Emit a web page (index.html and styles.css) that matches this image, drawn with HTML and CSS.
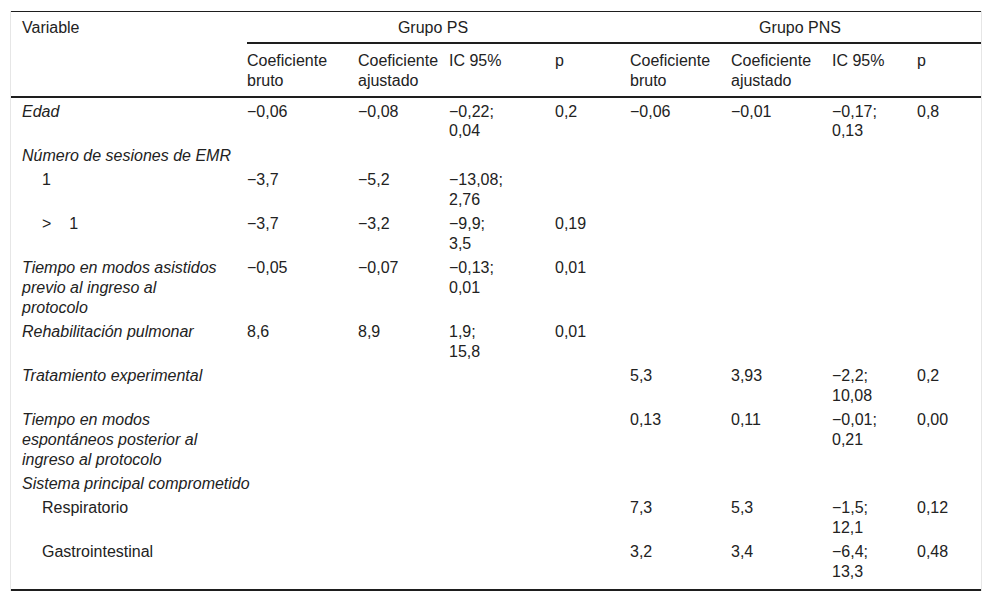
FILE: index.html
```html
<!DOCTYPE html>
<html lang="es">
<head>
<meta charset="utf-8">
<title>Tabla</title>
<link rel="stylesheet" href="styles.css">
</head>
<body>
<div class="wrap">
<table class="tbl">
<colgroup>
<col class="c-var"><col class="c-b1"><col class="c-a1"><col class="c-ic1"><col class="c-p1">
<col class="c-b2"><col class="c-a2"><col class="c-ic2"><col class="c-p2">
</colgroup>
<thead>
<tr>
<th rowspan="2" class="h-var">Variable</th>
<th colspan="4" class="h-grp">Grupo PS</th>
<th colspan="4" class="h-grp">Grupo PNS</th>
</tr>
<tr class="h-sub">
<th>Coeficiente<br>bruto</th>
<th>Coeficiente<br>ajustado</th>
<th>IC 95%</th>
<th>p</th>
<th>Coeficiente<br>bruto</th>
<th>Coeficiente<br>ajustado</th>
<th>IC 95%</th>
<th>p</th>
</tr>
</thead>
<tbody>
<tr>
<td class="var">Edad</td>
<td>−0,06</td><td>−0,08</td><td>−0,22;<br>0,04</td><td>0,2</td>
<td>−0,06</td><td>−0,01</td><td>−0,17;<br>0,13</td><td>0,8</td>
</tr>
<tr>
<td class="var">Número de sesiones de EMR</td>
<td></td><td></td><td></td><td></td><td></td><td></td><td></td><td></td>
</tr>
<tr>
<td class="sub">1</td>
<td>−3,7</td><td>−5,2</td><td>−13,08;<br>2,76</td><td></td>
<td></td><td></td><td></td><td></td>
</tr>
<tr>
<td class="sub">&gt;&nbsp;&nbsp;&nbsp;&nbsp;1</td>
<td>−3,7</td><td>−3,2</td><td>−9,9;<br>3,5</td><td>0,19</td>
<td></td><td></td><td></td><td></td>
</tr>
<tr>
<td class="var">Tiempo en modos asistidos<br>previo al ingreso al<br>protocolo</td>
<td>−0,05</td><td>−0,07</td><td>−0,13;<br>0,01</td><td>0,01</td>
<td></td><td></td><td></td><td></td>
</tr>
<tr>
<td class="var">Rehabilitación pulmonar</td>
<td>8,6</td><td>8,9</td><td>1,9;<br>15,8</td><td>0,01</td>
<td></td><td></td><td></td><td></td>
</tr>
<tr>
<td class="var">Tratamiento experimental</td>
<td></td><td></td><td></td><td></td>
<td>5,3</td><td>3,93</td><td>−2,2;<br>10,08</td><td>0,2</td>
</tr>
<tr>
<td class="var">Tiempo en modos<br>espontáneos posterior al<br>ingreso al protocolo</td>
<td></td><td></td><td></td><td></td>
<td>0,13</td><td>0,11</td><td>−0,01;<br>0,21</td><td>0,00</td>
</tr>
<tr>
<td class="var">Sistema principal comprometido</td>
<td></td><td></td><td></td><td></td><td></td><td></td><td></td><td></td>
</tr>
<tr>
<td class="sub">Respiratorio</td>
<td></td><td></td><td></td><td></td>
<td>7,3</td><td>5,3</td><td>−1,5;<br>12,1</td><td>0,12</td>
</tr>
<tr class="last">
<td class="sub">Gastrointestinal</td>
<td></td><td></td><td></td><td></td>
<td>3,2</td><td>3,4</td><td>−6,4;<br>13,3</td><td>0,48</td>
</tr>
</tbody>
</table>
</div>
</body>
</html>
```
FILE: styles.css
```css
html, body {
  margin: 0;
  padding: 0;
  background: #ffffff;
}

body {
  font-family: "Liberation Sans", Arial, sans-serif;
  font-size: 16px;
  line-height: 19.8px;
  color: #222222;
}

.wrap {
  margin: 11px 0 0 10px;
  width: 970px;
  border-left: 1px solid #e6e6e6;
  border-right: 1px solid #e6e6e6;
}

.tbl {
  width: 970px;
  table-layout: fixed;
  border-collapse: separate;
  border-spacing: 0;
  border-top: 1px solid #1e1e1e;
  border-bottom: 2px solid #1e1e1e;
}

.c-var { width: 236px; }
.c-b1 { width: 111px; }
.c-a1 { width: 91px; }
.c-ic1 { width: 106px; }
.c-p1 { width: 75px; }
.c-b2 { width: 101px; }
.c-a2 { width: 101px; }
.c-ic2 { width: 85px; }
.c-p2 { width: 64px; }

.tbl th,
.tbl td {
  font-weight: normal;
  text-align: left;
  vertical-align: top;
  white-space: nowrap;
  padding: 3.7px 6px 0.8px 0;
}

.tbl th.h-var {
  padding: 5.5px 6px 5px 11px;
  border-bottom: 2px solid #1e1e1e;
}

.tbl th.h-grp {
  text-align: center;
  padding: 5.5px 11px 4.5px 0;
  border-bottom: 2px solid #1e1e1e;
}

.tbl .h-sub th {
  padding: 7.5px 6px 5px 0;
  border-bottom: 2px solid #1e1e1e;
}

.tbl td.var {
  font-style: italic;
  padding-left: 11px;
}

.tbl td.sub {
  padding-left: 31px;
}

.tbl .last td {
  padding-bottom: 7.5px;
}
```
